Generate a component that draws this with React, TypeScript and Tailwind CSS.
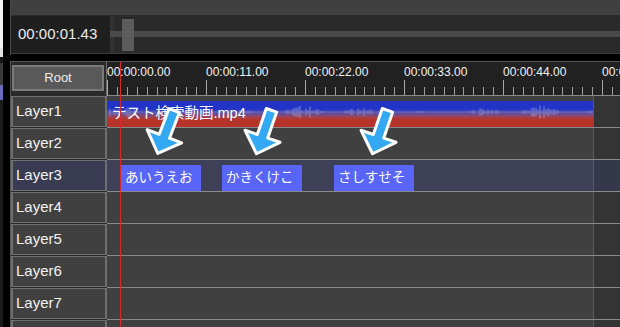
const layers = ['Layer1', 'Layer2', 'Layer3', 'Layer4', 'Layer5', 'Layer6', 'Layer7', 'Layer8']
const marks = ['00:00:00.00', '00:00:11.00', '00:00:22.00', '00:00:33.00', '00:00:44.00', '00:00:55.00']

function frac(n: number) {
  return n - Math.floor(n)
}

// fake audio wave drawn across the video clip
const wavePath = Array.from({ length: 243 }, (_, i) => {
  const x = i * 2 + 1
  const r = frac(Math.sin(i * 12.9898) * 43758.5453)
  const env = Math.max(0, Math.sin(i * 0.21) + Math.sin(i * 0.057 + 2) * 0.8)
  const a = 0.5 + env * r * 3.5
  return `M${x} ${(11 - a).toFixed(1)}V${(11 + a).toFixed(1)}`
}).join('')

function Ticks() {
  return (
    <svg width="99" height="16" className="mt-auto block">
      <line x1="0.5" y1="1" x2="0.5" y2="16" stroke="#a8a8a8" />
      {Array.from({ length: 9 }, (_, k) => {
        const x = Math.round((k + 1) * 9.9) + 0.5
        return <line key={k} x1={x} y1="8" x2={x} y2="16" stroke="#a0a0a0" />
      })}
    </svg>
  )
}

function Arrow({ angle }: { angle: number }) {
  return (
    <svg width="64" height="64" viewBox="0 0 64 64">
      <g transform={`translate(32 32) rotate(${angle}) translate(0 -24)`}>
        <polygon
          points="-5.5,1 5.5,1 5.5,28.5 18.5,28.5 0,47 -18.5,28.5 -5.5,28.5"
          fill="#33a9f4"
          stroke="#ffffff"
          strokeWidth="3"
          strokeLinejoin="round"
        />
      </g>
    </svg>
  )
}

function App() {
  return (
    <div className="relative flex h-[327px] w-[620px] overflow-hidden bg-black font-['Liberation_Sans','Noto_Sans_CJK_JP',sans-serif] text-white">
      {/* window edge */}
      <div className="flex w-[3px] shrink-0 flex-col">
        <div className="h-[48px] bg-[#f0f0f0]" />
        <div className="h-[9px] bg-[#e2e2e2]" />
        <div className="h-[6px] bg-[#141414]" />
        <div className="h-[22px] bg-[#3a3a3a]" />
        <div className="h-[15px] bg-[#6a6ac0]" />
        <div className="flex-1 bg-[#1c1c1c]" />
      </div>
      <div className="w-[7px] shrink-0 bg-black" />

      <div className="flex min-w-0 flex-1 flex-col">
        {/* preview / seek bar */}
        <div className="flex h-[55px] shrink-0 flex-col border-l border-[#4a4a4a]">
          <div className="h-[16px] border-b border-[#2c2c2c] bg-[#404040]" />
          <div className="flex h-[38px] border-b border-[#3a3a3a]">
            <div className="flex w-[99px] shrink-0 items-center bg-[#1f1f1f] pl-[7px] text-[15px] text-[#ececec]">
              00:00:01.43
            </div>
            <div className="flex w-[4px] shrink-0 flex-col bg-[#323232]">
              <div className="mt-[15px] h-[6px] bg-[#4a4a4a]" />
            </div>
            <div className="relative flex-1 bg-[#2a2a2a]">
              <div className="mt-[15px] h-[6px] bg-[#4a4a4a]" />
              <div className="absolute left-[8px] top-[3px] h-[32px] w-[12px] bg-[#5c5c5c]" />
            </div>
          </div>
        </div>

        <div className="h-[6px] shrink-0 bg-black" />

        {/* timeline */}
        <div className="flex min-h-0 flex-1 overflow-hidden border-l border-t border-[#555555]">
          <div className="flex w-[96px] shrink-0 flex-col bg-[#2a2a2a]">
            <div className="h-[34px] shrink-0 border-r border-[#6e6e6e] pl-px pt-[3px]">
              <div className="flex h-[26px] w-[92px] items-center justify-center border-2 border-[#7b7b7b] bg-[#595959] text-[13px] text-[#eeeeee]">
                Root
              </div>
            </div>
            <div className="flex flex-col gap-px">
              {layers.map((name) => (
                <div
                  key={name}
                  className={`flex h-[31px] shrink-0 items-center border-x-2 border-y border-[#6f6f6f] pl-[3px] text-[15px] text-[#f2f2f2] ${
                    name === 'Layer3' ? 'bg-[#383b52]' : 'bg-[#404040]'
                  }`}
                >
                  {name}
                </div>
              ))}
            </div>
          </div>

          <div className="flex min-w-0 flex-1 flex-col overflow-hidden">
            <div className="flex h-[34px] shrink-0 overflow-hidden border-b border-[#8a8a8a] bg-[#212121]">
              {marks.map((m) => (
                <div key={m} className="flex h-full w-[99px] shrink-0 flex-col">
                  <span className="whitespace-nowrap pt-[3px] text-[12px] leading-[14px] text-[#f4f4f4]">{m}</span>
                  <Ticks />
                </div>
              ))}
            </div>

            {layers.map((name) => (
              <div key={name} className="flex h-8 shrink-0 border-b border-[#8a8a8a]">
                <div
                  className={`flex w-[486px] shrink-0 ${name === 'Layer3' ? 'bg-[#3d4056]' : 'bg-[#404040]'}`}
                >
                  {name === 'Layer1' && (
                    <div className="relative mt-[5px] flex h-[26px] w-full items-center bg-[linear-gradient(to_bottom,#2233c8_0%,#2233c8_30%,#4d4db0_44%,#91486a_58%,#b8352a_70%,#b5322a_100%)]">
                      <svg width="486" height="26" className="absolute inset-0">
                        <path d={wavePath} stroke="#c8c8dc" strokeOpacity="0.5" strokeWidth="1.1" />
                      </svg>
                      <span className="relative whitespace-nowrap pl-[5px] text-[14.5px] text-white">テスト検索動画.mp4</span>
                    </div>
                  )}
                  {name === 'Layer3' && (
                    <>
                      <div className="ml-[14px] mt-[5px] flex h-[26px] w-[80px] items-center bg-[#5865f8] pl-[4px] text-[13.5px]">
                        あいうえお
                      </div>
                      <div className="ml-[21px] mt-[5px] flex h-[26px] w-[80px] items-center bg-[#5865f8] pl-[4px] text-[13.5px]">
                        かきくけこ
                      </div>
                      <div className="ml-[32px] mt-[5px] flex h-[26px] w-[80px] items-center bg-[#5865f8] pl-[4px] text-[13.5px]">
                        さしすせそ
                      </div>
                    </>
                  )}
                </div>
                <div
                  className={`flex-1 border-l border-[#5a5a5a] ${name === 'Layer3' ? 'bg-[#35384b]' : 'bg-[#343434]'}`}
                />
              </div>
            ))}
          </div>
        </div>
      </div>

      {/* playhead */}
      <div className="absolute bottom-0 left-[120px] top-[62px] w-px bg-[#d42a2a]" />

      {/* annotation arrows */}
      <div className="absolute left-[134px] top-[100px]">
        <Arrow angle={21} />
      </div>
      <div className="absolute left-[232px] top-[100px]">
        <Arrow angle={19} />
      </div>
      <div className="absolute left-[348px] top-[100px]">
        <Arrow angle={19} />
      </div>
    </div>
  )
}

export default App
